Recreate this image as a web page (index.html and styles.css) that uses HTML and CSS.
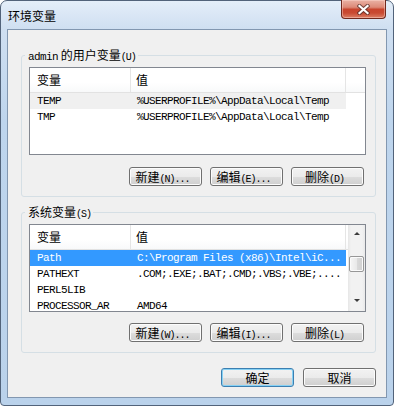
FILE: index.html
```html
<!DOCTYPE html>
<html lang="zh-CN">
  <head>
    <meta charset="UTF-8" />
    <meta name="viewport" content="width=device-width, initial-scale=1.0" />
    <title>环境变量</title>
    <link rel="stylesheet" href="styles.css">
  </head>
  <body>
    <div class="window">
      <div class="titlebar">
        <span class="title">环境变量</span>
        <button class="close" aria-label="关闭">
          <svg width="13" height="11" viewBox="0 0 13 11">
            <path d="M2.5 2 L10.5 9 M10.5 2 L2.5 9" stroke="#4a2a26" stroke-width="4.2" stroke-linecap="square" fill="none" opacity="0.7" />
            <path d="M2.5 2 L10.5 9 M10.5 2 L2.5 9" stroke="#fff" stroke-width="2.2" stroke-linecap="square" fill="none" />
          </svg>
        </button>
      </div>

      <div class="client">
        <fieldset class="group user">
          <legend><span class="lat">admin</span> 的用户变量<span class="key">(U)</span></legend>
          <div class="list">
            <div class="list-body">
              <div class="header">
                <div class="col name">变量</div>
                <div class="col value">值</div>
                <div class="col fill"></div>
              </div>
              <div class="row dim">
                <div class="cell name">TEMP</div>
                <div class="cell value">%USERPROFILE%\AppData\Local\Temp</div>
              </div>
              <div class="row">
                <div class="cell name">TMP</div>
                <div class="cell value">%USERPROFILE%\AppData\Local\Temp</div>
              </div>
            </div>
          </div>
          <div class="buttons">
            <button class="btn">新建<span class="key">(N)...</span></button>
            <button class="btn">编辑<span class="key">(E)...</span></button>
            <button class="btn">删除<span class="key">(D)</span></button>
          </div>
        </fieldset>

        <fieldset class="group system">
          <legend>系统变量<span class="key">(S)</span></legend>
          <div class="list">
            <div class="list-body">
              <div class="header">
                <div class="col name">变量</div>
                <div class="col value">值</div>
                <div class="col fill"></div>
              </div>
              <div class="row active">
                <div class="cell name">Path</div>
                <div class="cell value">C:\Program Files (x86)\Intel\iC...</div>
              </div>
              <div class="row">
                <div class="cell name">PATHEXT</div>
                <div class="cell value">.COM;.EXE;.BAT;.CMD;.VBS;.VBE;....</div>
              </div>
              <div class="row">
                <div class="cell name">PERL5LIB</div>
                <div class="cell value"></div>
              </div>
              <div class="row">
                <div class="cell name">PROCESSOR_AR</div>
                <div class="cell value">AMD64</div>
              </div>
            </div>
            <div class="scrollbar">
              <div class="arrow up"></div>
              <div class="thumb"></div>
              <div class="arrow down"></div>
            </div>
          </div>
          <div class="buttons">
            <button class="btn">新建<span class="key">(W)...</span></button>
            <button class="btn">编辑<span class="key">(I)...</span></button>
            <button class="btn">删除<span class="key">(L)</span></button>
          </div>
        </fieldset>

        <div class="dialog-buttons">
          <button class="btn default">确定</button>
          <button class="btn">取消</button>
        </div>
      </div>
    </div>
  </body>
</html>
```

FILE: styles.css
```css
body {
  margin: 0;
  font-family: "Noto Sans CJK SC", sans-serif;
  font-size: 12px;
  color: #000;
}
.window {
  width: 394px;
  height: 406px;
  box-sizing: border-box;
  border: 1px solid #52637a;
  border-radius: 7px 7px 4px 4px;
  background: linear-gradient(#e4eef9, #cfdff1 28px, #bed5ed 120px, #bad2eb);
  padding: 0 6px 7px;
  display: flex;
  flex-direction: column;
}
.titlebar {
  height: 28px;
  flex-shrink: 0;
  display: flex;
  justify-content: space-between;
  align-items: flex-start;
}
.title {
  align-self: center;
  margin-top: 1px;
  padding-left: 1px;
  line-height: 14px;
}
.close {
  width: 45px;
  height: 19px;
  margin: -1px 1px 0 0;
  padding: 0;
  box-sizing: border-box;
  border: 1px solid #70291e;
  border-top: none;
  border-radius: 0 0 4px 4px;
  background: linear-gradient(#eab2a5, #dd8a78 40%, #c8452e 52%, #c94a32 72%, #dc7f66);
  box-shadow: inset 0 0 0 1px rgba(255, 220, 210, 0.45);
  display: flex;
  align-items: center;
  justify-content: center;
}
.client {
  flex: 1;
  border: 1px solid #8297b0;
  background: #f0f0f0;
  display: flex;
  flex-direction: column;
}
.group {
  margin: 0 10px 0 13px;
  padding: 5px 9px 10px 7px;
  border: 1px solid #d5dfe5;
  border-radius: 3px;
  min-width: 0;
}
.group.user {
  margin-top: 18px;
}
.group.system {
  margin-top: 8px;
}
.group legend {
  height: 14px;
  margin-left: -4px;
  padding: 0 2px 0 3px;
  line-height: 14px;
}
.lat {
  font-family: "Liberation Mono", monospace;
  font-size: 11px;
  letter-spacing: -0.6px;
}
.key {
  font-family: "Liberation Mono", monospace;
  font-size: 10px;
  letter-spacing: -1px;
}
.list {
  height: 88px;
  box-sizing: border-box;
  border: 1px solid #828790;
  background: #fff;
  display: flex;
  overflow: hidden;
}
.list-body {
  flex: 1;
  min-width: 0;
  overflow: hidden;
}
.header {
  display: flex;
  height: 25px;
  box-sizing: border-box;
  border-bottom: 1px solid #e2e2e2;
  background: linear-gradient(#fff 60%, #f8f9fa);
}
.header .col {
  box-sizing: border-box;
  border-right: 1px solid #e5e5e5;
  line-height: 23px;
}
.header .fill {
  flex: 1;
  border-right: none;
}
.name {
  width: 101px;
  padding-left: 7px;
  box-sizing: border-box;
}
.value {
  width: 215px;
  padding-left: 6px;
  box-sizing: border-box;
}
.header .value {
  padding-left: 5px;
}
.row {
  display: flex;
  width: 316px;
  height: 16px;
  line-height: 16px;
  font-family: "Liberation Mono", monospace;
  font-size: 11px;
  letter-spacing: -0.6px;
}
.cell {
  white-space: nowrap;
  overflow: hidden;
}
.row.dim {
  background: #f0f0f0;
}
.row.active {
  background: #3399ff;
  color: #fff;
}
.scrollbar {
  width: 17px;
  flex-shrink: 0;
  display: flex;
  flex-direction: column;
  background: linear-gradient(90deg, #e6e6e6, #f2f2f2 3px, #f2f2f2 14px, #e9e9e9);
}
.arrow {
  height: 17px;
  display: flex;
  align-items: center;
  justify-content: center;
}
.arrow::before {
  content: "";
  width: 0;
  height: 0;
  border-left: 3px solid transparent;
  border-right: 3px solid transparent;
}
.arrow.up::before {
  border-bottom: 3px solid #3c3c3c;
}
.arrow.down {
  margin-top: auto;
}
.arrow.down::before {
  margin-top: -4px;
  border-top: 3px solid #3c3c3c;
}
.thumb {
  height: 16px;
  margin: 14px 1px 0;
  box-sizing: border-box;
  border: 1px solid #979797;
  border-radius: 2px;
  background: linear-gradient(90deg, #f6f6f6, #e9e9e9 50%, #dadada 51%, #d0d0d0);
  box-shadow: inset 0 0 0 1px #fbfbfb;
}
.buttons {
  display: flex;
  justify-content: flex-end;
  gap: 8px;
  margin-top: 12px;
  padding-right: 2px;
}
.system .buttons {
  margin-top: 11px;
}
.btn {
  width: 73px;
  height: 19px;
  box-sizing: border-box;
  padding: 0;
  border: 1px solid #707070;
  border-radius: 3px;
  background: linear-gradient(#f2f2f2, #ebebeb 50%, #dddddd 51%, #cfcfcf);
  box-shadow: inset 0 0 0 1px #fcfcfc;
  font-family: "Noto Sans CJK SC", sans-serif;
  font-size: 12px;
  line-height: 17px;
  color: #000;
}
.buttons .btn {
  padding-right: 6px;
}
.btn.default {
  border-color: #3c7fb1;
  box-shadow: inset 0 0 0 1px #86d1f4;
}
.dialog-buttons {
  margin-top: auto;
  display: flex;
  justify-content: flex-end;
  gap: 9px;
  padding: 0 10px 10px 0;
}
```
